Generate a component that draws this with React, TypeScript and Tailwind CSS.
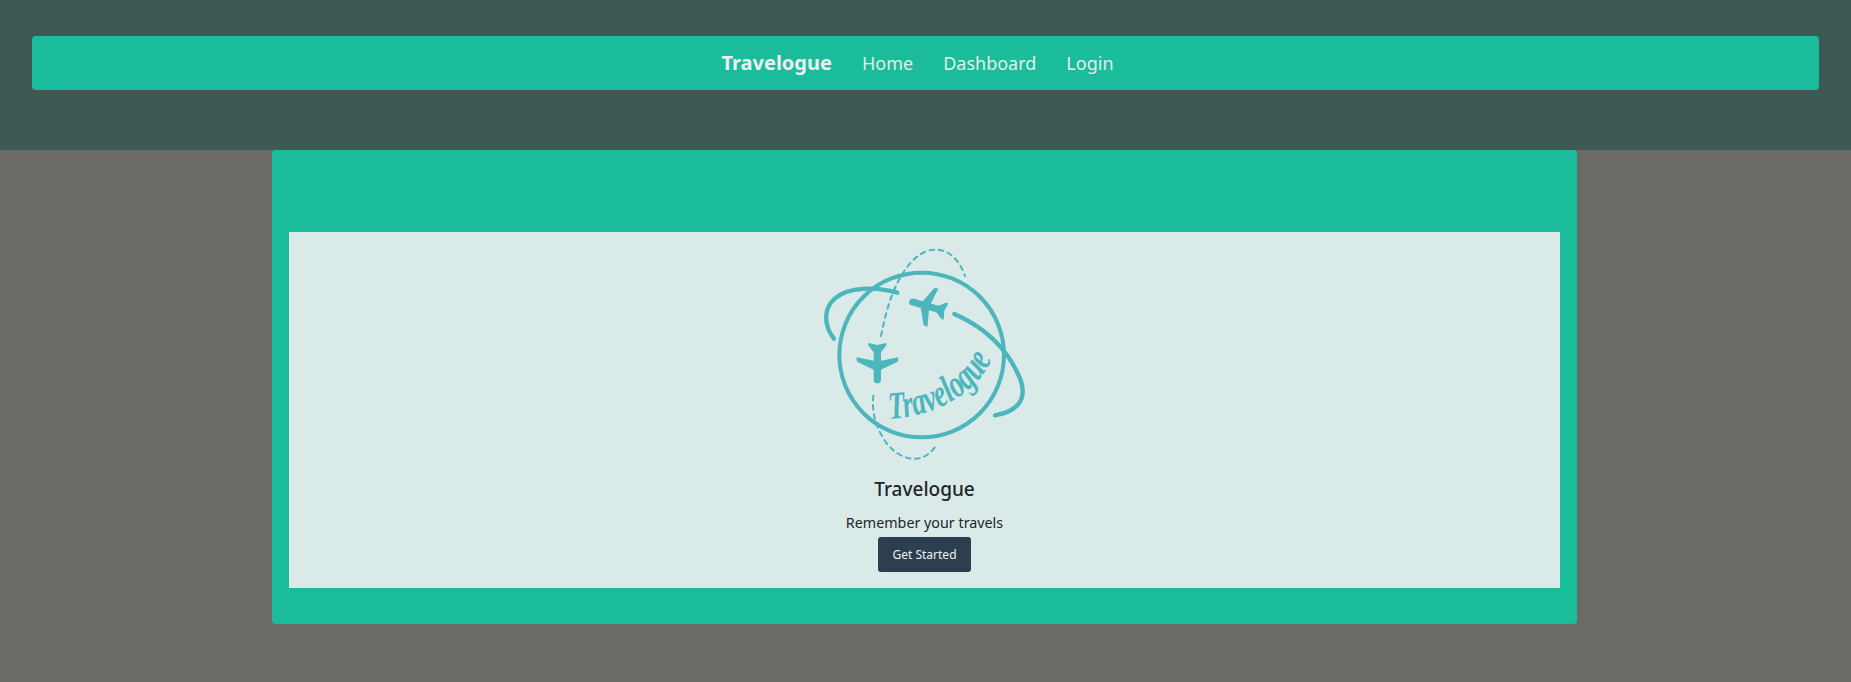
const planePath =
  "M0 65 a11 11 0 0 0 11 -11 V24 L61 0 L63 -13 L11 -3 V-28 L28 -50 L26 -56 L0 -50 L-26 -56 L-28 -50 L-11 -28 V-3 L-63 -13 L-61 0 L-11 24 V54 a11 11 0 0 0 11 11 Z";

const Logo = () => {
  return (
    <svg viewBox="0 0 900 750" className="w-[300px] h-[250px] shrink-0 -mt-[2px] ml-[10px]">
      <circle cx="425" cy="375" r="247" fill="none" stroke="#4db6bc" strokeWidth="12" />
      <g fill="none" stroke="#4db6bc" strokeLinecap="round">
        <path strokeWidth="13" d="M162 326 C130 285 130 235 165 205 C205 170 285 170 352 188" />
        <path strokeWidth="13" d="M523 252 C610 290 680 350 720 445 C745 510 710 545 645 556" />
        <g strokeWidth="6" strokeDasharray="14 14">
          <path d="M303 318 C320 230 345 150 395 95 C450 35 525 50 555 138" />
          <path d="M280 497 C275 545 285 590 320 640 C365 695 430 705 467 648" />
        </g>
      </g>
      <g fill="#4db6bc">
        <path d={planePath} transform="translate(292 395)" />
        <path d={planePath} transform="translate(447 230) rotate(106) scale(0.95)" />
      </g>
      <path id="logo-arc" d="M328 566 C440 563 575 508 632 396" fill="none" />
      <text
        fill="#4db6bc"
        fontSize="116"
        fontWeight="700"
        fontStyle="italic"
        fontFamily="'Liberation Serif', serif"
      >
        <textPath href="#logo-arc" textLength="375" lengthAdjust="spacingAndGlyphs">
          Travelogue
        </textPath>
      </text>
    </svg>
  );
};

const App = () => {
  return (
    <div className="h-[682px] bg-[#6c6a65] font-['Noto_Sans',sans-serif] overflow-hidden">
      <header className="h-[150px] bg-[#3e5854] pt-9 px-8">
        <nav className="h-[54px] bg-[#1abc9c] rounded flex items-center justify-center pr-[16px] text-[#e3eeea]">
          <a className="text-[20px] font-bold text-[#ecf0f1] mr-[30px]">Travelogue</a>
          <a className="text-[18px] mr-[30px]">Home</a>
          <a className="text-[18px] mr-[30px]">Dashboard</a>
          <a className="text-[18px]">Login</a>
        </nav>
      </header>
      <main className="w-[1305px] h-[474px] ml-[272px] bg-[#1abc9c] rounded pt-[82px] px-[17px]">
        <section className="h-[356px] bg-[#d9eae8] flex flex-col items-center text-[#212529]">
          <Logo />
          <h5 className="text-[19px] font-medium leading-[22px] mt-[-2px]">Travelogue</h5>
          <p className="text-[14.3px] leading-[21px] mt-[12px]">Remember your travels</p>
          <a className="w-[93px] h-[35px] mt-[4px] bg-[#2c3e50] rounded-[3px] text-[#ecf0f1] text-[12px] flex items-center justify-center">
            Get Started
          </a>
        </section>
      </main>
    </div>
  );
};

export default App;
